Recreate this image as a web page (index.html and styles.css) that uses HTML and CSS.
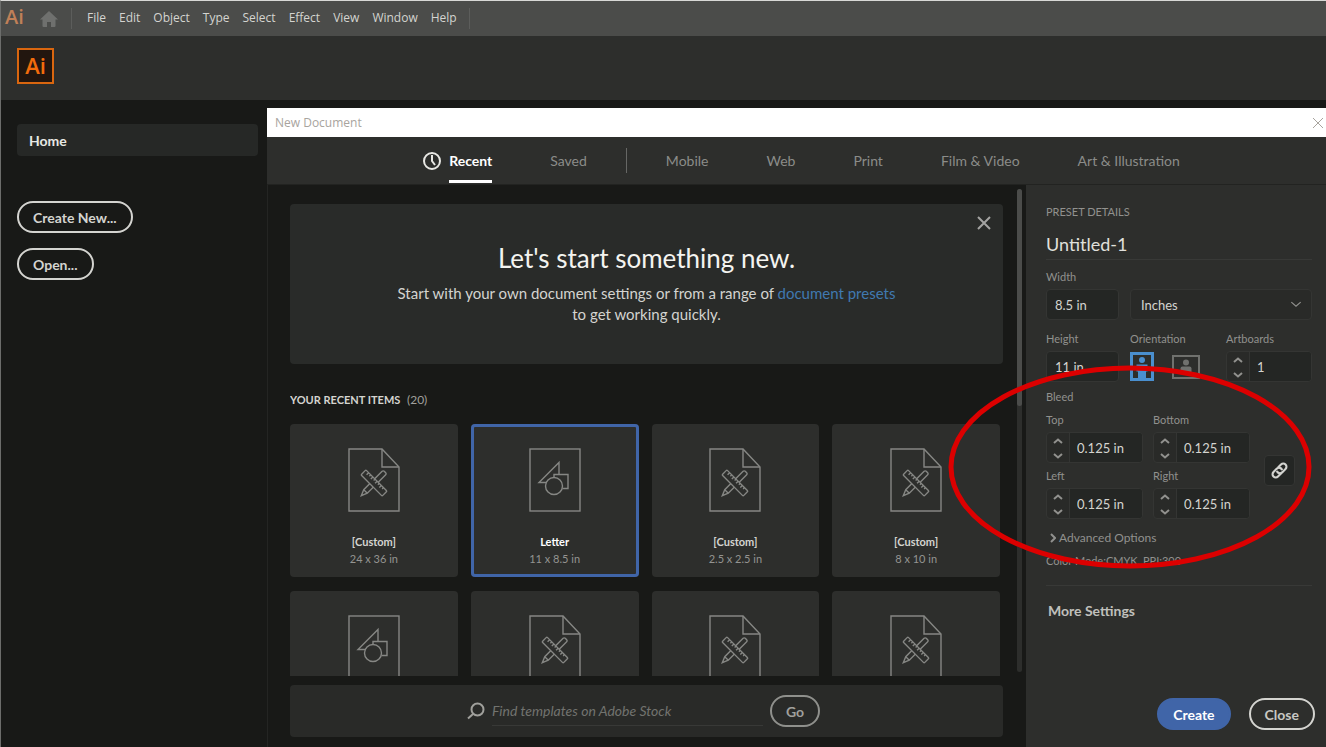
FILE: index.html
```html
<!DOCTYPE html>
<html lang="en">
<head>
  <meta charset="utf-8">
  <title>New Document</title>
  <link rel="stylesheet" href="styles.css">
</head>
<body>
  <!-- shared icons -->
  <svg class="defs" width="0" height="0" aria-hidden="true">
    <symbol id="doc-custom" viewBox="0 0 52 64">
      <path d="M1 1h33l17 18v44H1z"/>
      <path d="M34 1v18h17"/>
      <g transform="translate(26 35) rotate(-45)">
        <path d="M-18 0l6-2.500H14a1.500 1.500 0 0 1 1.500 1.500v2a1.500 1.500 0 0 1-1.500 1.500H-12zM-12-2.500v5"/>
      </g>
      <g transform="translate(26 35) rotate(45)">
        <rect class="solid" x="-15" y="-3.500" width="30" height="7" rx="1"/>
        <path d="M-11-3.500v3M-8-3.500v2M-5-3.500v3M-2-3.500v2M1-3.500v3M4-3.500v2M7-3.500v3M10-3.500v2"/>
      </g>
    </symbol>
    <symbol id="doc-shapes" viewBox="0 0 52 64">
      <rect x="1" y="1" width="50" height="62"/>
      <path d="M18 34.500H10L30 14.500V26"/>
      <path d="M25 29v-2.500h14v14h-5.500"/>
      <circle cx="25" cy="38" r="8.500"/>
    </symbol>
    <symbol id="up" viewBox="0 0 10 6"><path d="M1 5l4-3.500L9 5"/></symbol>
    <symbol id="down" viewBox="0 0 10 6"><path d="M1 1l4 3.500L9 1"/></symbol>
  </svg>

  <nav class="menubar">
    <span class="app-name">Ai</span>
    <svg class="home-icon" width="18" height="16" viewBox="0 0 18 16"><path d="M9 0l9 8.500h-2.500V15a1 1 0 0 1-1 1H11v-5H7v5H3.500a1 1 0 0 1-1-1V8.500H0z"/></svg>
    <ul>
      <li>File</li>
      <li>Edit</li>
      <li>Object</li>
      <li>Type</li>
      <li>Select</li>
      <li>Effect</li>
      <li>View</li>
      <li>Window</li>
      <li>Help</li>
    </ul>
  </nav>
  <header class="header">
    <div class="logo">Ai</div>
  </header>

  <div class="workspace">
    <aside class="sidebar">
      <a class="home" href="#">Home</a>
      <button class="pill" type="button">Create New...</button>
      <button class="pill" type="button">Open...</button>
    </aside>

    <section class="dialog">
      <div class="titlebar">
        <span>New Document</span>
        <button type="button" aria-label="Close window"><svg width="12" height="12" viewBox="0 0 12 12"><path d="M1 1l10 10M11 1L1 11"/></svg></button>
      </div>
      <div class="tabs">
        <svg class="clock" width="18" height="18" viewBox="0 0 18 18"><circle cx="9" cy="9" r="8"/><path d="M9 3v6l3 4"/></svg>
        <a class="active" href="#">Recent</a>
        <a href="#">Saved</a>
        <span class="divider"></span>
        <a href="#">Mobile</a>
        <a href="#">Web</a>
        <a href="#">Print</a>
        <a href="#">Film &amp; Video</a>
        <a href="#">Art &amp; Illustration</a>
      </div>

      <div class="content">
        <main class="presets">
          <div class="scroller">
            <div class="list">
              <div class="banner">
                <button class="dismiss" type="button" aria-label="Dismiss"><svg width="14" height="14" viewBox="0 0 14 14"><path d="M1 1l12 12M13 1L1 13"/></svg></button>
                <h1>Let's start something new.</h1>
                <p>Start with your own document settings or from a range of <a href="#">document presets</a><br>to get working quickly.</p>
              </div>
              <h2>YOUR RECENT ITEMS <span>(20)</span></h2>
              <div class="grid">
                <div class="card">
                  <svg><use href="#doc-custom"/></svg>
                  <b>[Custom]</b>
                  <span>24 x 36 in</span>
                </div>
                <div class="card selected">
                  <svg><use href="#doc-shapes"/></svg>
                  <b>Letter</b>
                  <span>11 x 8.5 in</span>
                </div>
                <div class="card">
                  <svg><use href="#doc-custom"/></svg>
                  <b>[Custom]</b>
                  <span>2.5 x 2.5 in</span>
                </div>
                <div class="card">
                  <svg><use href="#doc-custom"/></svg>
                  <b>[Custom]</b>
                  <span>8 x 10 in</span>
                </div>
                <div class="card"><svg><use href="#doc-shapes"/></svg></div>
                <div class="card"><svg><use href="#doc-custom"/></svg></div>
                <div class="card"><svg><use href="#doc-custom"/></svg></div>
                <div class="card"><svg><use href="#doc-custom"/></svg></div>
              </div>
            </div>
            <div class="track"><div class="thumb"></div></div>
          </div>
          <form class="stock">
            <svg width="18" height="18" viewBox="0 0 18 18"><circle cx="10.500" cy="7.500" r="6"/><path d="M6 12l-5 4.500"/></svg>
            <input type="text" aria-label="Find templates" placeholder="Find templates on Adobe Stock">
            <button class="pill" type="button">Go</button>
          </form>
        </main>

        <form class="details">
          <h3>PRESET DETAILS</h3>
          <input class="doc-name" type="text" aria-label="Name" value="Untitled-1">
          <div class="row">
            <div class="field small">
              <label for="width">Width</label>
              <input type="text" id="width" value="8.5 in">
            </div>
            <div class="field units">
              <select id="units" aria-label="Units"><option>Inches</option></select>
              <svg class="caret"><use href="#down"/></svg>
            </div>
          </div>
          <div class="row">
            <div class="field small">
              <label for="height">Height</label>
              <input type="text" id="height" value="11 in">
            </div>
            <div class="field orientation">
              <span class="label">Orientation</span>
              <div class="choices">
                <button class="on" type="button" aria-label="Portrait"><svg width="24" height="29" viewBox="0 0 24 29"><rect x="1.500" y="1.500" width="21" height="26"/><circle cx="12" cy="8" r="3"/><path d="M6.500 12.500h11v7H16V26H8v-6.500H6.500z"/></svg></button>
                <button type="button" aria-label="Landscape"><svg width="28" height="24" viewBox="0 0 28 24"><rect x="1" y="1" width="26" height="22"/><circle cx="14" cy="7.500" r="3"/><path d="M8.500 18v-4.500q0-2 2-2h7q2 0 2 2V18z"/></svg></button>
              </div>
            </div>
            <div class="field artboards">
              <label for="artboards">Artboards</label>
              <div class="stepper">
                <div class="arrows"><button type="button" aria-label="More"><svg><use href="#up"/></svg></button><button type="button" aria-label="Less"><svg><use href="#down"/></svg></button></div>
                <input type="text" id="artboards" value="1">
              </div>
            </div>
          </div>
          <h4>Bleed</h4>
          <div class="bleed">
            <div class="sides">
              <div class="field">
                <label for="top">Top</label>
                <div class="stepper">
                  <div class="arrows"><button type="button" aria-label="More"><svg><use href="#up"/></svg></button><button type="button" aria-label="Less"><svg><use href="#down"/></svg></button></div>
                  <input type="text" id="top" value="0.125 in">
                </div>
              </div>
              <div class="field">
                <label for="bottom">Bottom</label>
                <div class="stepper">
                  <div class="arrows"><button type="button" aria-label="More"><svg><use href="#up"/></svg></button><button type="button" aria-label="Less"><svg><use href="#down"/></svg></button></div>
                  <input type="text" id="bottom" value="0.125 in">
                </div>
              </div>
              <div class="field">
                <label for="left">Left</label>
                <div class="stepper">
                  <div class="arrows"><button type="button" aria-label="More"><svg><use href="#up"/></svg></button><button type="button" aria-label="Less"><svg><use href="#down"/></svg></button></div>
                  <input type="text" id="left" value="0.125 in">
                </div>
              </div>
              <div class="field">
                <label for="right">Right</label>
                <div class="stepper">
                  <div class="arrows"><button type="button" aria-label="More"><svg><use href="#up"/></svg></button><button type="button" aria-label="Less"><svg><use href="#down"/></svg></button></div>
                  <input type="text" id="right" value="0.125 in">
                </div>
              </div>
            </div>
            <button class="link" type="button" aria-label="Link all sides"><svg width="17" height="17" viewBox="0 0 16 16"><g transform="rotate(-45 8 8)"><path d="M7 11H3a3 3 0 0 1 0-6H7.500a3 3 0 0 1 2.500 4.500"/><path d="M9 5h4a3 3 0 0 1 0 6H8.500A3 3 0 0 1 6 6.500"/></g></svg></button>
          </div>
          <a class="advanced" href="#"><svg width="6" height="10" viewBox="0 0 6 10"><path d="M1 1l4 4-4 4"/></svg>Advanced Options</a>
          <p class="mode">Color Mode:CMYK, PPI:300</p>
          <a class="more" href="#">More Settings</a>
          <div class="actions">
            <button class="pill primary" type="button">Create</button>
            <button class="pill" type="button">Close</button>
          </div>
          <svg class="highlight" width="364" height="204" viewBox="0 0 364 204"><ellipse cx="182" cy="102" rx="179" ry="99"/></svg>
        </form>
      </div>
    </section>
  </div>
</body>
</html>
```
FILE: styles.css
```css
* {
  box-sizing: border-box;
}
body {
  margin: 0;
  height: 100vh;
  display: flex;
  flex-direction: column;
  overflow: hidden;
  border-top: 1px solid #d8d8d6;
  border-left: 1px solid #6c6d6b;
  background: #181917;
  color: #d4d4d0;
  font-family: Lato, "Open Sans", sans-serif;
  font-size: 14px;
}
a {
  color: inherit;
  text-decoration: none;
}
button, input, select {
  font: inherit;
  color: inherit;
}
button {
  padding: 0;
  border: 0;
  background: none;
}
svg {
  fill: none;
  stroke: currentColor;
  flex-shrink: 0;
}
.defs {
  position: absolute;
}
.pill {
  height: 32px;
  padding: 0 14px;
  border: 2px solid #d4d4d0;
  border-radius: 16px;
  font-weight: bold;
}

/* top bars */
.menubar {
  height: 35px;
  flex-shrink: 0;
  display: flex;
  align-items: center;
  background: #4b4c4a;
  font-family: "Open Sans", sans-serif;
  font-size: 12px;
}
.app-name {
  width: 39px;
  padding-left: 4px;
  color: #c08058;
  font-family: "Open Sans", sans-serif;
  font-size: 20px;
  font-weight: 600;
  line-height: 32px;
  align-self: flex-start;
}
.home-icon {
  fill: #6f706e;
  stroke: none;
}
.menubar ul {
  display: flex;
  gap: 13px;
  margin: 0 0 0 13px;
  padding: 1px 12px 3px 15px;
  border-left: 1px solid #5c5d5b;
  border-right: 1px solid #5c5d5b;
  list-style: none;
}
.header {
  height: 64px;
  flex-shrink: 0;
  display: flex;
  align-items: center;
  padding: 0 16px 4px;
  background: #2d2e2c;
}
.logo {
  width: 37px;
  height: 36px;
  border: 2px solid #d9660f;
  background: #22160f;
  color: #f26c0c;
  font-family: "Open Sans", sans-serif;
  font-size: 22px;
  font-weight: 600;
  line-height: 30px;
  text-align: center;
}
.workspace {
  flex: 1;
  min-height: 0;
  display: flex;
}

/* sidebar */
.sidebar {
  width: 266px;
  flex-shrink: 0;
  display: flex;
  flex-direction: column;
  align-items: flex-start;
  gap: 15px;
  padding: 24px 9px 0 16px;
}
.home {
  width: 100%;
  height: 32px;
  margin-bottom: 30px;
  padding-left: 12px;
  border-radius: 4px;
  background: #262826;
  color: #e8e8e4;
  font-weight: bold;
  line-height: 34px;
}

/* dialog */
.dialog {
  flex: 1;
  min-width: 0;
  display: flex;
  flex-direction: column;
  margin-top: 8px;
}
.titlebar {
  height: 29px;
  display: flex;
  align-items: center;
  justify-content: space-between;
  padding: 0 2px 0 8px;
  background: #fff;
  color: #a8a49e;
  font-family: "Open Sans", sans-serif;
  font-size: 12px;
}
.titlebar button {
  display: flex;
}
.tabs {
  height: 48px;
  display: flex;
  align-items: center;
  justify-content: center;
  gap: 58px;
  padding-left: 10px;
  background: #2d2e2c;
  border-bottom: 1px solid #222321;
  color: #8b8c89;
}
.tabs a {
  line-height: 20px;
  white-space: nowrap;
}
.tabs .clock {
  margin-right: -50px;
  color: #e8e8e4;
  stroke-width: 2;
}
.tabs .active {
  padding: 13px 0 9px;
  border-bottom: 3px solid #fff;
  color: #fff;
  font-weight: bold;
}
.divider {
  width: 1px;
  height: 25px;
  margin: 0 -19px;
  background: #666765;
}
.content {
  flex: 1;
  min-height: 0;
  display: flex;
}

/* presets */
.presets {
  flex: 1;
  min-width: 0;
  display: flex;
  flex-direction: column;
  border-left: 1px solid #242523;
}
.scroller {
  flex: 1;
  min-height: 0;
  display: flex;
  gap: 14px;
  padding: 0 4px 0 22px;
}
.list {
  flex: 1;
  padding-top: 19px;
  overflow: hidden;
}
.track {
  width: 5px;
  margin: 4px 0;
  border-radius: 3px;
  background: #2d2e2c;
}
.thumb {
  height: 45%;
  border-radius: 3px;
  background: #4b4c4a;
}
.banner {
  position: relative;
  height: 160px;
  padding-top: 38px;
  border-radius: 4px;
  background: #292b29;
  text-align: center;
}
.dismiss {
  position: absolute;
  top: 12px;
  right: 12px;
  display: flex;
  color: #a4a4a2;
}
.dismiss svg {
  stroke-width: 2;
}
.banner h1 {
  margin: 0 0 9px;
  color: #f4f4f0;
  font-size: 26px;
  font-weight: normal;
  line-height: 32px;
}
.banner p {
  margin: 0;
  font-size: 15px;
  line-height: 21px;
}
.banner a {
  color: #4079b0;
}
.list h2 {
  margin: 26px 0 14px;
  font-size: 11px;
  font-weight: bold;
  line-height: 20px;
}
.list h2 span {
  margin-left: 4px;
  color: #a0a09c;
  font-size: 12px;
  font-weight: normal;
}
.grid {
  display: grid;
  grid-template-columns: repeat(4, 1fr);
  gap: 14px 13px;
  margin-right: 3px;
}
.card {
  height: 153px;
  display: flex;
  flex-direction: column;
  align-items: center;
  padding-top: 24px;
  border-radius: 4px;
  background: #2d2e2c;
  color: #949491;
  font-size: 11px;
  line-height: 17px;
}
.card svg {
  width: 52px;
  height: 64px;
  margin-bottom: 21px;
  stroke: #868784;
  stroke-width: 1.4;
}
.card b {
  color: #d4d4d0;
}
.solid {
  fill: #2d2e2c;
}
.selected {
  box-shadow: inset 0 0 0 3px #4065a8;
}
.selected b {
  color: #fff;
}
.stock {
  height: 52px;
  display: flex;
  align-items: center;
  justify-content: center;
  gap: 7px;
  margin: 9px 23px 10px 22px;
  padding-right: 6px;
  border-radius: 4px;
  background: #292a28;
  color: #a0a09c;
}
.stock svg {
  stroke-width: 2;
}
.stock input {
  width: 271px;
  height: 30px;
  padding: 0;
  border: 0;
  border-bottom: 1px solid #383937;
  background: none;
  font-style: italic;
}
.stock input::placeholder {
  color: #72736f;
}
.stock .pill {
  width: 50px;
  padding: 0;
  border-color: #8f908c;
}

/* details */
.details {
  position: relative;
  width: 300px;
  flex-shrink: 0;
  display: flex;
  flex-direction: column;
  padding: 17px 14px 17px 20px;
  background: #2d2e2c;
  color: #91918e;
  font-size: 12px;
}
.details h3, .details h4 {
  margin: 0;
  font-size: 11px;
  font-weight: normal;
  line-height: 20px;
}
.doc-name {
  height: 32px;
  margin: 6px 0 7px;
  padding: 0;
  border: 0;
  border-bottom: 1px solid #383937;
  background: none;
  color: #e0e0dc;
  font-size: 18px;
}
.row {
  display: flex;
  align-items: flex-end;
  gap: 11px;
}
.row + .row {
  margin-top: 9px;
}
.field {
  position: relative;
}
.field label, .label {
  display: block;
  margin-bottom: 2px;
  font-size: 11px;
  line-height: 20px;
}
.field input, .field select {
  display: block;
  width: 100%;
  height: 31px;
  padding: 0 8px;
  border: 1px solid #343533;
  border-radius: 4px;
  background: #242624;
  color: #d4d4d0;
  font-size: 13px;
}
.small {
  width: 73px;
}
.units {
  flex: 1;
}
.field select {
  padding: 0 10px;
  background: #292a28;
  appearance: none;
}
.caret {
  position: absolute;
  right: 10px;
  top: 12px;
  width: 12px;
  height: 7px;
}
.orientation {
  flex: 1;
}
.choices {
  display: flex;
  align-items: center;
  gap: 18px;
  height: 31px;
}
.choices button {
  display: flex;
  color: #70716e;
}
.choices rect {
  stroke-width: 2;
}
.choices .on {
  color: #4a8fcf;
}
.choices .on rect {
  stroke-width: 3;
}
.choices circle, .choices path {
  fill: currentColor;
  stroke: none;
}
.artboards {
  width: 86px;
}
.stepper {
  display: flex;
  border: 1px solid #343533;
  border-radius: 4px;
  background: #292a28;
}
.stepper input {
  flex: 1;
  min-width: 0;
  height: 29px;
  padding: 0 7px;
  border-width: 0 0 0 1px;
  border-radius: 0 3px 3px 0;
}
.arrows {
  width: 22px;
  display: flex;
  flex-direction: column;
  align-items: center;
  justify-content: space-between;
  padding: 5px 0 3px;
}
.arrows button {
  display: flex;
}
.arrows svg {
  width: 10px;
  height: 6px;
  stroke-width: 2;
}
.details h4 {
  margin: 5px 0 3px;
}
.bleed {
  display: flex;
  align-items: center;
  gap: 14px;
}
.sides {
  width: 204px;
  display: grid;
  grid-template-columns: 1fr 1fr;
  gap: 3px 10px;
}
.link {
  width: 31px;
  height: 31px;
  display: flex;
  align-items: center;
  justify-content: center;
  margin-top: 12px;
  border: 1px solid #343533;
  border-radius: 4px;
  background: #242624;
  color: #d4d4d0;
}
.link svg {
  stroke-width: 2;
}
.advanced {
  display: flex;
  align-items: center;
  gap: 3px;
  margin-top: 9px;
  padding-left: 4px;
  line-height: 20px;
}
.advanced svg {
  stroke-width: 2;
}
.mode {
  margin: 3px 0 0;
  padding-bottom: 14px;
  border-bottom: 1px solid #383937;
  font-size: 11px;
  line-height: 20px;
}
.more {
  margin-top: 15px;
  padding-left: 2px;
  color: #c0c0bc;
  font-size: 14px;
  font-weight: bold;
  line-height: 20px;
}
.actions {
  display: flex;
  justify-content: flex-end;
  gap: 18px;
  margin: auto -3px 0 0;
  color: #c8c8c4;
  font-size: 14px;
}
.primary {
  border-color: #4065a8;
  background: #4065a8;
  color: #fff;
}
/* ring around the bleed settings */
.highlight {
  position: absolute;
  left: -78px;
  top: 180px;
  stroke: #dc0000;
  stroke-width: 5;
}
```
